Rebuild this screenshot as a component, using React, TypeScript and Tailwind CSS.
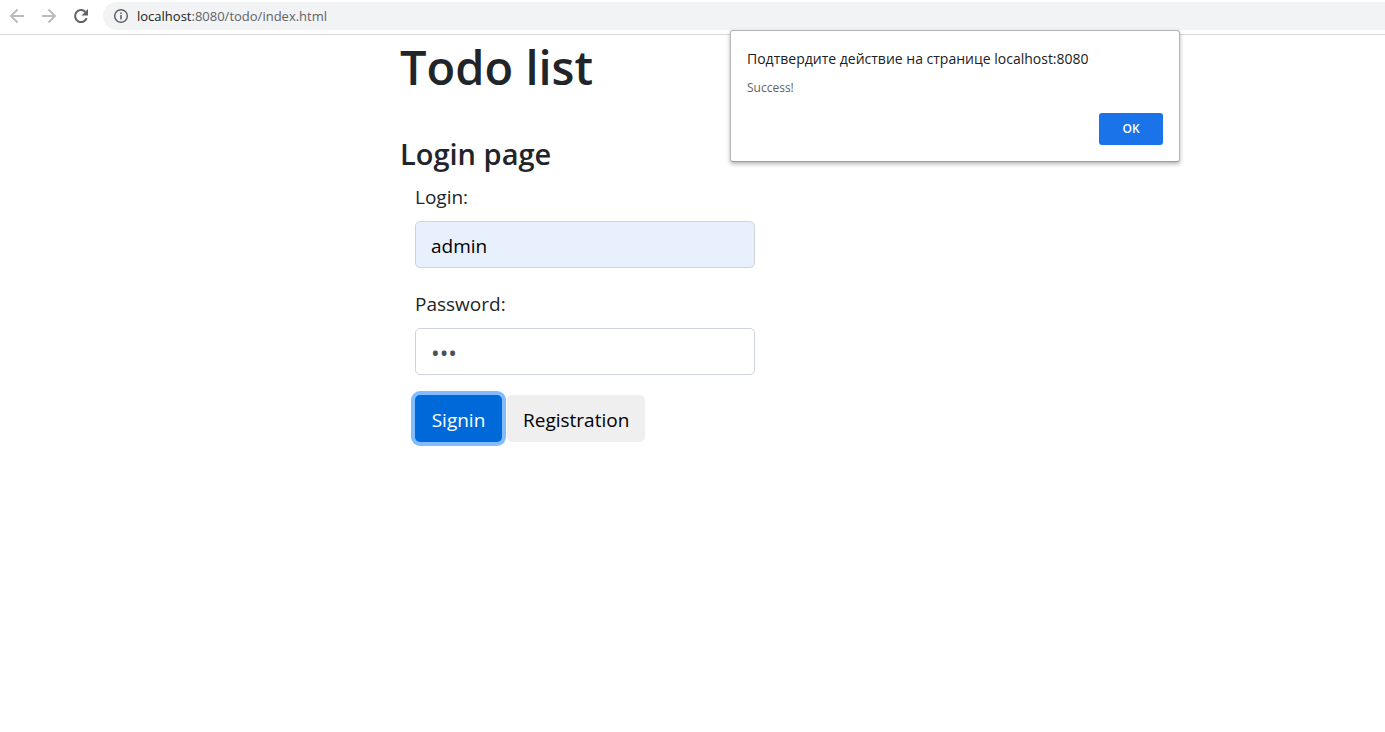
import React from "react";

function BackIcon() {
  return (
    <svg viewBox="0 0 16 16" className="size-4" fill="none" stroke="#babcbe" strokeWidth="2" aria-hidden="true">
      <path d="M15 8H2.500M8.500 1.500L2 8l6.500 6.500" />
    </svg>
  );
}

function ForwardIcon() {
  return (
    <svg viewBox="0 0 16 16" className="size-4" fill="none" stroke="#babcbe" strokeWidth="2" aria-hidden="true">
      <path d="M1 8h12.500M7.500 1.500L14 8l-6.500 6.500" />
    </svg>
  );
}

function ReloadIcon() {
  return (
    <svg viewBox="0 0 16 16" className="size-4" aria-hidden="true">
      <path d="M13.700 10.200A6 6 0 1 1 12.400 3.900" fill="none" stroke="#5f6368" strokeWidth="2" />
      <path d="M15 1v6.500H8.500z" fill="#5f6368" />
    </svg>
  );
}

function InfoIcon() {
  return (
    <svg viewBox="0 0 16 16" className="size-4" aria-hidden="true">
      <circle cx="8" cy="8" r="6.300" fill="none" stroke="#5f6368" strokeWidth="1.500" />
      <path d="M7.200 7h1.600v4.500H7.200zM7.200 4.500h1.600v1.600H7.200z" fill="#5f6368" />
    </svg>
  );
}

function Toolbar() {
  return (
    <header className="flex h-[35px] items-start border-b border-[#dadada] bg-white pt-0.5 pl-[9px]">
      <nav className="flex h-7 items-center gap-4">
        <button type="button" aria-label="Back"><BackIcon /></button>
        <button type="button" aria-label="Forward"><ForwardIcon /></button>
        <button type="button" aria-label="Reload"><ReloadIcon /></button>
      </nav>
      <div className="ml-3.5 flex h-7 grow items-center gap-2 rounded-l-full bg-[#f1f3f4] pl-2.5 text-[13px] text-[#5f6368]">
        <InfoIcon />
        <span className="pt-0.5">
          <span className="text-[#202124]">localhost</span>:8080/todo/index.html
        </span>
      </div>
    </header>
  );
}

function AlertDialog() {
  return (
    <div
      role="alertdialog"
      aria-labelledby="alert-title"
      aria-describedby="alert-text"
      className="absolute top-[30px] left-[730px] flex w-[450px] flex-col rounded-[3px] border border-[#b4b6b8] border-b-[#9a9c9e] bg-white p-4 shadow-[0_2px_4px_rgba(0,0,0,0.3)]"
    >
      <h2 id="alert-title" className="text-[14px] leading-6 text-[#202124]">
        Подтвердите действие на странице localhost:8080
      </h2>
      <p id="alert-text" className="mt-1.5 text-[12px] leading-[22px] text-[#5f6368]">Success!</p>
      <button type="button" className="mt-3.5 h-8 w-16 self-end rounded-[3px] bg-[#1a73e8] text-[12px] font-semibold text-white">
        OK
      </button>
    </div>
  );
}

const field = "h-[47px] w-full rounded-[5px] border border-[#ced4da] px-[15px] outline-none";

export default function App() {
  return (
    <div className="relative min-h-screen bg-white font-['Open_Sans','Noto_Sans',sans-serif] text-[#212529]">
      <Toolbar />
      <main className="pl-[400px]">
        <h1 className="text-[47px] leading-[64px] font-semibold">Todo list</h1>
        <h2 className="mt-9 text-[29px] leading-[38px] font-semibold">Login page</h2>
        <form className="mt-2 w-[370px] px-[15px] text-[19px] leading-8" onSubmit={(e) => e.preventDefault()}>
          <div className="mb-5 flex flex-col gap-2">
            <label htmlFor="login">Login:</label>
            <input id="login" type="text" defaultValue="admin" className={`${field} bg-[#e8f0fe] pt-0.5 text-black`} />
          </div>
          <div className="mb-5 flex flex-col gap-2">
            <label htmlFor="password">Password:</label>
            <input id="password" type="password" defaultValue="123" className={`${field} bg-white pt-0.5 text-[23px] text-[#495057]`} />
          </div>
          <div className="flex gap-[5px]">
            <button type="submit" className="h-[47px] min-w-[87px] rounded-[5px] bg-[#0069d9] px-4 pt-0.5 text-white ring-4 ring-[#80bcff]">
              Signin
            </button>
            <button type="button" className="h-[47px] rounded-[5px] bg-[#efefef] px-4 pt-0.5 text-black">
              Registration
            </button>
          </div>
        </form>
      </main>
      <AlertDialog />
    </div>
  );
}
